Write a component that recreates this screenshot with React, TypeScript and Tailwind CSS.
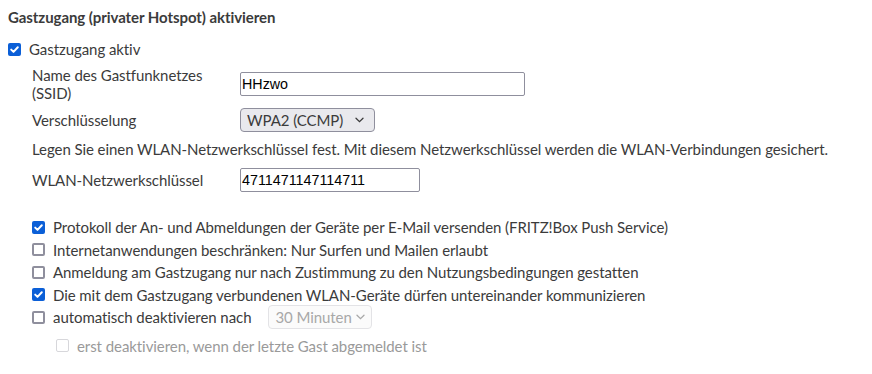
import React from 'react'

const Box = ({ checked = false, disabled = false }: { checked?: boolean; disabled?: boolean }) => (
  <span
    className={
      checked
        ? 'flex h-[13px] w-[13px] shrink-0 items-center justify-center rounded-[2px] bg-[#0b5fd7]'
        : disabled
          ? 'block h-[13px] w-[13px] shrink-0 rounded-[2px] border border-[#d7d7db] bg-white'
          : 'block h-[13px] w-[13px] shrink-0 rounded-[2px] border-2 border-[#8f8f9d] bg-white'
    }
  >
    {checked && (
      <svg width="11" height="11" viewBox="0 0 11 11" fill="none">
        <path d="M2.2 5.6 L4.5 7.9 L8.8 3.2" stroke="white" strokeWidth="2" strokeLinecap="round" strokeLinejoin="round" />
      </svg>
    )}
  </span>
)

const Chevron = ({ color }: { color: string }) => (
  <svg width="9" height="6" viewBox="0 0 9 6" fill="none" className="shrink-0">
    <path d="M1 1.2 L4.5 4.6 L8 1.2" stroke={color} strokeWidth="1.3" strokeLinecap="round" />
  </svg>
)

const options = [
  { text: 'Protokoll der An- und Abmeldungen der Geräte per E-Mail versenden (FRITZ!Box Push Service)', checked: true },
  { text: 'Internetanwendungen beschränken: Nur Surfen und Mailen erlaubt', checked: false },
  { text: 'Anmeldung am Gastzugang nur nach Zustimmung zu den Nutzungsbedingungen gestatten', checked: false },
  { text: 'Die mit dem Gastzugang verbundenen WLAN-Geräte dürfen untereinander kommunizieren', checked: true },
]

export default function App() {
  return (
    <div
      className="h-[374px] w-[872px] bg-white pl-2 pt-[8px] text-[15px] leading-[18px] tracking-[-0.07px] text-[#3b3b3b]"
      style={{ fontFamily: 'Lato, "Noto Sans", sans-serif' }}
    >
      <h2 className="font-bold">Gastzugang (privater Hotspot) aktivieren</h2>

      <div className="mt-[14px] flex items-center gap-2">
        <Box checked />
        <span>Gastzugang aktiv</span>
      </div>

      <div className="pl-6">
        <div className="mt-[8px] flex items-center">
          <div className="w-[208px] shrink-0">
            Name des Gastfunknetzes
            <br />
            (SSID)
          </div>
          <div
            className="flex h-[24px] w-[285px] items-center rounded-[2px] border border-[#8f8f9d] px-[1px] text-[14.3px] tracking-normal text-black"
            style={{ fontFamily: '"Liberation Sans", sans-serif' }}
          >
            HHzwo
          </div>
        </div>

        <div className="mt-[6px] flex items-center">
          <div className="w-[208px] shrink-0">Verschlüsselung</div>
          <div className="flex h-[24px] w-[135px] items-center justify-between rounded-[4px] border border-[#8f8f9d] bg-[#e9e9ed] pl-[6px] pr-[10px]">
            <span>WPA2 (CCMP)</span>
            <Chevron color="#3b3b3b" />
          </div>
        </div>

        <p className="mt-[8px]">
          Legen Sie einen WLAN-Netzwerkschlüssel fest. Mit diesem Netzwerkschlüssel werden die WLAN-Verbindungen gesichert.
        </p>

        <div className="mt-[10px] flex items-center">
          <div className="w-[208px] shrink-0">WLAN-Netzwerkschlüssel</div>
          <div
            className="flex h-[24px] w-[180px] items-center rounded-[2px] border border-[#8f8f9d] px-[1px] text-[14.3px] tracking-normal text-black"
            style={{ fontFamily: '"Liberation Sans", sans-serif' }}
          >
            4711471147114711
          </div>
        </div>

        <div className="mt-[24px] flex flex-col">
          {options.map((o) => (
            <div key={o.text} className="flex h-[22.5px] items-center gap-2">
              <Box checked={o.checked} />
              <span>{o.text}</span>
            </div>
          ))}
          <div className="flex h-[22px] items-center gap-2">
            <Box />
            <span>automatisch deaktivieren nach</span>
            <div className="ml-[9px] flex h-[24px] w-[104px] shrink-0 items-center justify-between gap-1 whitespace-nowrap rounded-[4px] border border-[#e3e3e6] bg-[#fbfbfb] pl-[6px] pr-[8px] text-[#a8a8a8]">
              <span>30 Minuten</span>
              <Chevron color="#a8a8a8" />
            </div>
          </div>
          <div className="mt-[6px] flex h-[23px] items-center gap-2 pl-6 text-[#9a9a9a]">
            <Box disabled />
            <span>erst deaktivieren, wenn der letzte Gast abgemeldet ist</span>
          </div>
        </div>
      </div>
    </div>
  )
}
